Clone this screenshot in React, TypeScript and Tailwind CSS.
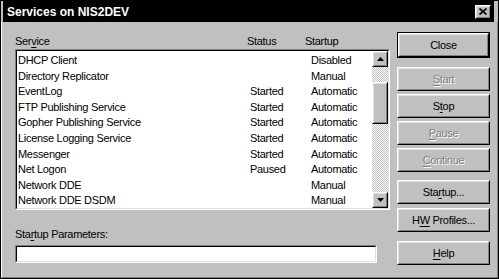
import React from "react";

const rows: [string, string, string][] = [
  ["DHCP Client", "", "Disabled"],
  ["Directory Replicator", "", "Manual"],
  ["EventLog", "Started", "Automatic"],
  ["FTP Publishing Service", "Started", "Automatic"],
  ["Gopher Publishing Service", "Started", "Automatic"],
  ["License Logging Service", "Started", "Automatic"],
  ["Messenger", "Started", "Automatic"],
  ["Net Logon", "Paused", "Automatic"],
  ["Network DDE", "", "Manual"],
  ["Network DDE DSDM", "", "Manual"],
];

function U({ children }: { children: React.ReactNode }) {
  return <span className="underline decoration-1 underline-offset-[2px]">{children}</span>;
}

function Raised({ children, className = "" }: { children?: React.ReactNode; className?: string }) {
  return (
    <div className={`bg-[#c0c0c0] border border-t-white border-l-white border-r-black border-b-black ${className}`}>
      <div className="h-full w-full border border-t-[#dfdfdf] border-l-[#dfdfdf] border-r-[#808080] border-b-[#808080] flex items-center justify-center">
        {children}
      </div>
    </div>
  );
}

function Btn({ children, disabled, className = "" }: { children: React.ReactNode; disabled?: boolean; className?: string }) {
  return (
    <Raised className={`h-[24px] w-full ${className}`}>
      <span className={disabled ? "text-[#808080] [text-shadow:1px_1px_0_#ffffff]" : "text-black"}>{children}</span>
    </Raised>
  );
}

function Arrow({ up }: { up?: boolean }) {
  return (
    <svg width="7" height="4" viewBox="0 0 7 4" className="block">
      {up ? <polygon points="3.5,0 7,4 0,4" fill="#000" /> : <polygon points="0,0 7,0 3.5,4" fill="#000" />}
    </svg>
  );
}

export default function App() {
  return (
    <div className="w-[499px] h-[279px] bg-[#c0c0c0] border border-black flex flex-col font-['Liberation_Sans',Arial,sans-serif] text-[11px] tracking-[-0.3px] text-black overflow-hidden">
      {/* title bar */}
      <div className="ml-[2px] mr-[4px] h-[21px] shrink-0 bg-black flex items-center justify-between pl-[4px] pr-[3px]">
        <span className="text-white font-bold text-[12px] tracking-normal">Services on NIS2DEV</span>
        <Raised className="w-[16px] h-[14px]">
          <svg width="8" height="7" viewBox="0 0 8 7" className="block">
            <path d="M0.5 0.5 L7.5 6.5 M7.5 0.5 L0.5 6.5" stroke="#000" strokeWidth="1.7" />
          </svg>
        </Raised>
      </div>
      {/* body */}
      <div className="flex-1 flex flex-row pl-[13px] pr-[7px] pt-[10px] border-l border-l-white border-r border-r-[#808080] border-b border-b-[#808080]">
        {/* left column */}
        <div className="w-[375px] flex flex-col mt-[3px]">
          <div className="h-[13px] flex leading-[13px]">
            <div className="w-[232px]">
              Ser<U>v</U>ice
            </div>
            <div className="w-[58px]">Status</div>
            <div>Startup</div>
          </div>
          <div className="mt-[1px] h-[161px] border border-t-[#808080] border-l-[#808080] border-r-white border-b-white">
            <div className="h-full w-full border border-t-black border-l-black border-r-[#dfdfdf] border-b-[#dfdfdf] bg-white flex">
              <div className="flex-1 pt-[2px] pl-[1px]">
                {rows.map((r) => (
                  <div key={r[0]} className="h-[15.6px] leading-[15.6px] flex whitespace-nowrap">
                    <div className="w-[232px]">{r[0]}</div>
                    <div className="w-[61px]">{r[1]}</div>
                    <div>{r[2]}</div>
                  </div>
                ))}
              </div>
              <div className="w-[16px] flex flex-col">
                <Raised className="h-[16px] w-[16px] shrink-0">
                  <Arrow up />
                </Raised>
                <div className="flex-1 [background-image:repeating-conic-gradient(#c0c0c0_0_25%,#ffffff_0_50%)] [background-size:2px_2px]">
                  <Raised className="mt-[15px] h-[42px] w-[16px]" />
                </div>
                <Raised className="h-[16px] w-[16px] shrink-0">
                  <Arrow />
                </Raised>
              </div>
            </div>
          </div>
          <div className="mt-[18px] h-[13px] leading-[13px]">
            Sta<U>r</U>tup Parameters:
          </div>
          <div className="mt-[4px] h-[18px] w-[362px] border border-t-[#808080] border-l-[#808080] border-r-white border-b-white">
            <div className="h-full w-full border border-t-black border-l-black border-r-[#dfdfdf] border-b-[#dfdfdf] bg-white" />
          </div>
        </div>
        {/* right column */}
        <div className="ml-[7px] w-[93px] flex flex-col">
          <div className="h-[26px] border border-black">
            <Btn className="!h-full">Close</Btn>
          </div>
          <Btn disabled className="mt-[9px]">
            <U>S</U>tart
          </Btn>
          <Btn className="mt-[3px]">
            S<U>t</U>op
          </Btn>
          <Btn disabled className="mt-[3px]">
            <U>P</U>ause
          </Btn>
          <Btn disabled className="mt-[3px]">
            <U>C</U>ontinue
          </Btn>
          <Btn className="mt-[8px]">
            Sta<U>r</U>tup...
          </Btn>
          <Btn className="mt-[4px]">
            H<U>W</U> Profiles...
          </Btn>
          <Btn className="mt-[9px]">
            <U>H</U>elp
          </Btn>
        </div>
      </div>
    </div>
  );
}
